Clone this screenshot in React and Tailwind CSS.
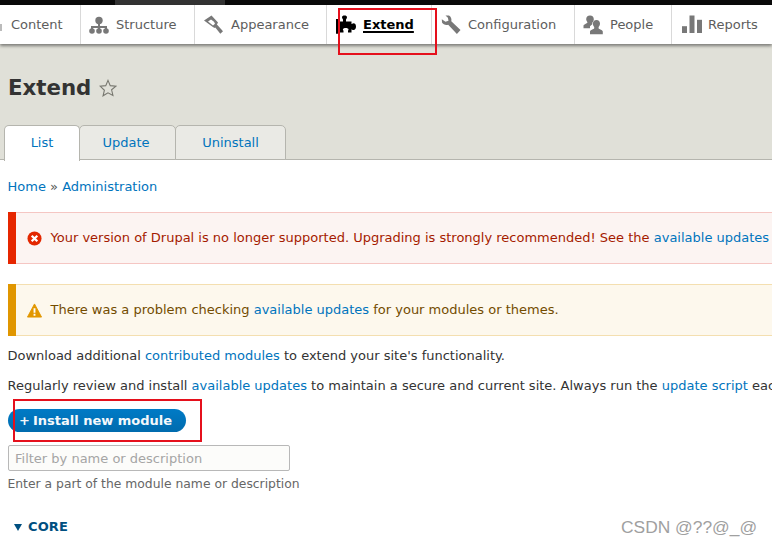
const F = { fontFamily: '"DejaVu Sans", sans-serif' };

const Puzzle = () => (
  <svg width="20" height="20" viewBox="0 0 20 20" fill="#000">
    <path d="M0 4h2.500V6.500H7V4.500C7 4 6 3.500 6 2.200 6 1 7 .5 8.500 .5S11 1 11 2.200c0 1.300-1 1.800-1 2.300V6.500h5.500V9c.5 0 .9-.8 2-.8 1.500 0 2.500 1.200 2.500 3.400 0 2.200-1 3.400-2.500 3.400-1.100 0-1.500-.8-2-.8V17.500H12v-1.500c0-.6.5-.8.5-1.500 0-1-1.300-1.500-2.800-1.500s-2.800.5-2.800 1.500c0 .7.6.9.6 1.500v1.500H2.500v1.200H0z" />
  </svg>
);
const Structure = () => (
  <svg width="20" height="20" viewBox="0 0 20 20" fill="#787878">
    <circle cx="10" cy="5.500" r="3.700" />
    <path d="M9 8h2v3h7v4h-2v-2h-5v2H9v-2H4v2H2v-4h7z" />
    <circle cx="3" cy="16" r="2.800" />
    <circle cx="10" cy="16" r="2.800" />
    <circle cx="17" cy="16" r="2.800" />
  </svg>
);
const Brush = () => (
  <svg width="20" height="20" viewBox="0 0 20 20" fill="#787878">
    <path fillRule="evenodd" d="M7.500 0.500l6.500 7-3 5.500-1.800-.7L0 5.500zM7 4.500L4 6.500l5 4 2-1.800-1-2z" />
    <path d="M10.500 11.500l2-2.500 6.500 7.300-2.700 2.500z" />
  </svg>
);
const Wrench = () => (
  <svg width="20" height="20" viewBox="0 0 20 20" fill="#787878">
    <path d="M4.500 0.500h3.500c2 1 2.800 3.500 2.300 5.800L19.500 15l-3.600 4-8.700-9.200c-2.500.6-5 0-6.200-2.200L.8 4.200l3.700 2.600 3-1-.6-3z" />
  </svg>
);
const People = () => (
  <svg width="20" height="20" viewBox="0 0 20 20" fill="#787878">
    <path d="M7 0.500c2.500 0 3.800 1.700 3.800 3.800 0 1.500-.7 2.600-1.500 3.500v1.500l-2.300 2v2H.5v-2.500c0-1.500 3.700-2 4-3.500-.7-.9-1.300-2-1.300-3C3.200 2.200 4.500.5 7 .5z" />
    <path d="M13.500 5c2.200 0 3.500 1.600 3.500 3.600 0 1.400-.6 2.700-1.400 3.400v1.200c.4 1.200 4.200 1.400 4.200 3.300v2.700H7v-2.700c0-1.900 3.800-2.100 4.200-3.300V12c-.8-.7-1.300-2-1.300-3.400C9.900 6.600 11.300 5 13.500 5z" />
  </svg>
);
const Bars = () => (
  <svg width="20" height="20" viewBox="0 0 20 20" fill="#787878">
    <rect x="0" y="11.200" width="5" height="6.800" />
    <rect x="7.500" y="0.500" width="5" height="17.500" />
    <rect x="15" y="4.800" width="5" height="13.200" />
  </svg>
);

const NavItem = ({ w, pl, icon, gap, children, active }) => (
  <div className={`flex h-full shrink-0 items-center border-r border-[#d9d9d9] ${w} ${pl}`}>
    {icon && <span className={`flex shrink-0 ${gap}`}>{icon}</span>}
    <span className={active ? "font-bold text-black underline decoration-2 underline-offset-2" : "text-[#5d5d5d]"}>{children}</span>
  </div>
);

const Tab = ({ w, active, children }) => (
  <div className={`flex items-center justify-center rounded-t-[5px] border border-[#b5b5ae] text-[#0074bd] ${w} ${active ? "relative z-10 -mb-px h-[36px] border-b-0 bg-white pb-px" : "-ml-px h-[35px] bg-[#eaeae5]"}`}>
    {children}
  </div>
);

const A = ({ children }) => <span className="text-[#0074bd]">{children}</span>;

export default function App() {
  return (
    <div className="relative h-[546px] w-[772px] overflow-hidden bg-white text-[13px] leading-[20px] text-[#333]" style={F}>
      <div className="flex h-[5px] bg-[#0a0a0a]">
        <div className="ml-[115px] h-full w-[110px] bg-[#333]" />
      </div>

      <div className="relative z-10 flex h-[39px] whitespace-nowrap bg-white shadow-[0_2px_3px_rgba(0,0,0,0.45)]">
        <NavItem w="w-[81px]" pl="pl-[9px]" gap="mr-0" icon={<span className="mt-[6px] -ml-[9px] mr-[9px] h-[7px] w-[2px] bg-[#bbbbbb]" />}>Content</NavItem>
        <NavItem w="w-[114px]" pl="pl-[8px]" gap="mr-[7px]" icon={<Structure />}>Structure</NavItem>
        <NavItem w="w-[132px]" pl="pl-[9px]" gap="mr-[7px]" icon={<Brush />}>Appearance</NavItem>
        <NavItem w="w-[105px]" pl="pl-[9px]" gap="mr-[7px]" icon={<Puzzle />} active>Extend</NavItem>
        <NavItem w="w-[143px]" pl="pl-[9px]" gap="mr-[7px]" icon={<Wrench />}>Configuration</NavItem>
        <NavItem w="w-[97px]" pl="pl-[8px]" gap="mr-[7px]" icon={<People />}>People</NavItem>
        <NavItem w="w-[100px] border-r-0" pl="pl-[10px]" gap="mr-[6px]" icon={<Bars />}>Reports</NavItem>
      </div>

      <div className="flex h-[116px] flex-col justify-between border-b border-[#b5b5ae] bg-[#e0e0d8] pl-[4px]">
        <div className="flex items-center gap-[8px] pl-[4px] pt-[29px]">
          <span className="text-[21.3px] font-bold leading-[30px] text-[#333]">Extend</span>
          <svg width="18" height="18" viewBox="0 0 20 20" fill="none" stroke="#77776f" strokeWidth="1.200">
            <path d="M10 1.500l2.500 5.900 6.300.5-4.800 4.100 1.500 6.200L10 15.400 4.500 18.700 6 12.500 1.200 7.900l6.300-.5z" />
          </svg>
        </div>
        <div className="-mb-px flex">
          <Tab w="w-[76px]" active>List</Tab>
          <Tab w="w-[97px] pr-[3px]">Update</Tab>
          <Tab w="w-[111px]">Uninstall</Tab>
        </div>
      </div>

      <div className="whitespace-nowrap pl-[8px]">
        <div className="mt-[17px] h-[20px] -ml-[0.5px]"><A>Home</A> <span className="text-[#555]">»</span> <A>Administration</A></div>

        <div className="mt-[15px] flex h-[52px] w-[800px] items-center border border-l-0 border-[#f5c6c3] bg-[#fcf4f2] text-[#a51b00]">
          <div className="h-[52px] w-[8px] shrink-0 bg-[#e62600]" />
          <svg className="ml-[11px] mr-[8.5px] shrink-0" width="15" height="15" viewBox="0 0 16 16">
            <circle cx="8" cy="8" r="7.500" fill="#e32700" />
            <path d="M5 5l6 6M11 5l-6 6" stroke="#fff" strokeWidth="2.400" />
          </svg>
          <span>Your version of Drupal is no longer supported. Upgrading is strongly recommended! See the <A>available updates</A></span>
        </div>

        <div className="mt-[20px] flex h-[52px] w-[800px] items-center border border-l-0 border-[#f4dfb0] bg-[#fdf8ed] text-[#734c00]">
          <div className="h-[52px] w-[8px] shrink-0 bg-[#e09600]" />
          <svg className="ml-[11px] mr-[8.5px] shrink-0" width="15" height="15" viewBox="0 0 16 16">
            <path d="M8 1l7.500 14H.5z" fill="#e29700" stroke="#e29700" strokeLinejoin="round" />
            <path d="M7 5.500h2v5H7zM7 11.500h2v2H7z" fill="#fff" />
          </svg>
          <span>There was a problem checking <A>available updates</A> for your modules or themes.</span>
        </div>

        <p className="mt-[10px] h-[20px] -ml-[0.5px]">Download additional <A>contributed modules</A> to extend your site's functionality.</p>
        <p className="mt-[10px] h-[20px] -ml-[0.5px]">Regularly review and install <A>available updates</A> to maintain a secure and current site. Always run the <A>update script</A> each time you have updated software.</p>

        <div className="mt-[13px] flex h-[23px] w-[178px] items-center rounded-[12px] bg-gradient-to-b from-[#007bc6] to-[#006bae] pl-[11px] text-[13px] font-bold text-[#f4f8fb]">
          <span className="mr-[3px]">+</span>Install new module
        </div>

        <div className="mt-[13px] flex h-[26px] w-[282px] items-center rounded-[2px] border border-[#b8b8b8] bg-[#fcfcfa] pl-[6px] pt-[2px] text-[#a5a5a5]">
          Filter by name or description
        </div>
        <div className="mt-[3px] h-[20px] -ml-[0.5px] text-[12.350px] text-[#666]">Enter a part of the module name or description</div>

        <div className="mt-[23px] flex items-center pl-[6px] font-bold tracking-[0.1px] text-[#004f80]">
          <svg className="mr-[6px]" width="8" height="7" viewBox="0 0 8 7" fill="#004f80"><path d="M0 0h8L4 7z" /></svg>
          CORE
        </div>
      </div>

      <div className="absolute left-[338px] top-[8px] z-20 h-[47px] w-[99px] border-2 border-[#e5101c]" />
      <div className="absolute left-[13px] top-[399px] z-20 h-[43px] w-[189px] border-2 border-[#e5101c]" />
      <div className="absolute left-[621px] top-[517px] z-20 text-[17.4px] leading-[20px] text-[#a0a0a0]" style={{ fontFamily: '"Liberation Sans", sans-serif' }}>CSDN @??@_@</div>
    </div>
  );
}
